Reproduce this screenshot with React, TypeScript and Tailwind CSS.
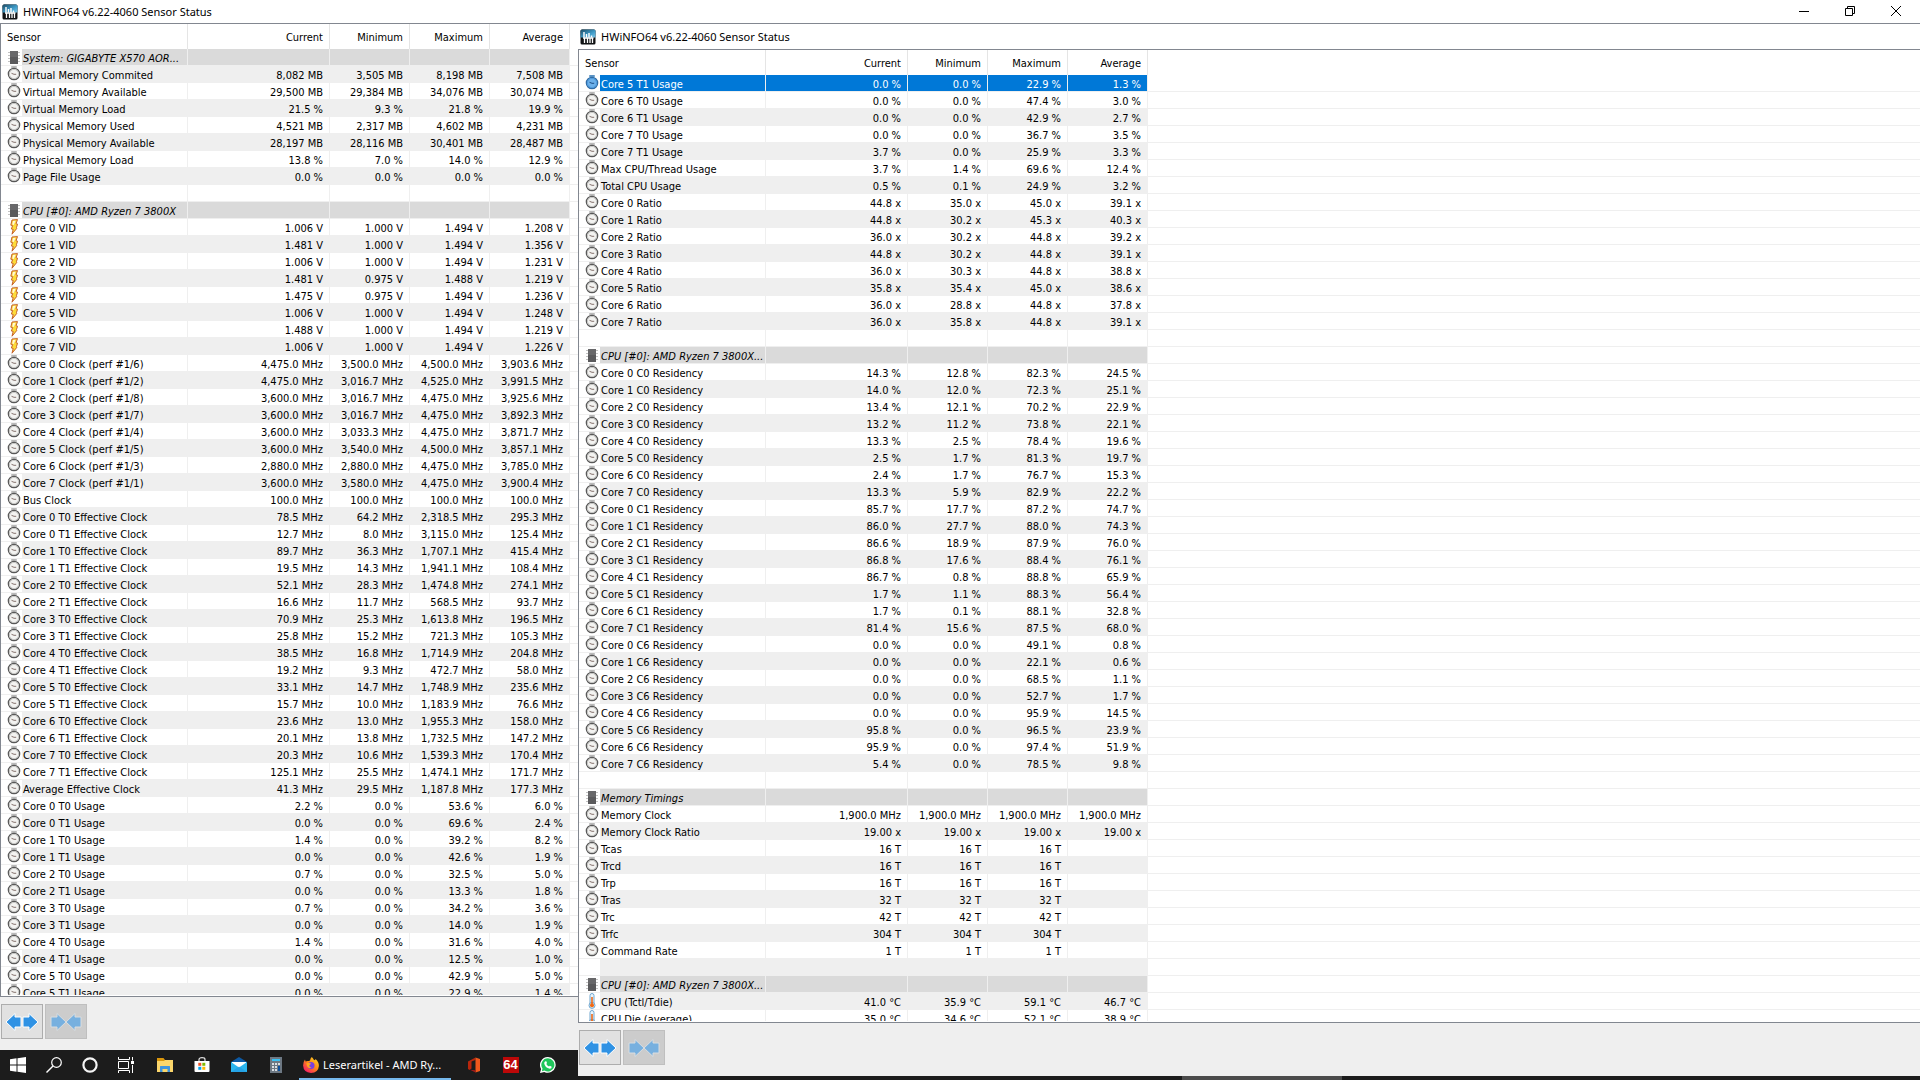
import React from "react";

type Kind = "clock" | "bolt" | "temp" | "chip" | "none";
type Row = { kind: Kind; label: string; values: string[] };

const parse = (source: string): Row[] =>
  source
    .trim()
    .split("\n")
    .map((line) => {
      const [code, label = "", data = "", unit = ""] = line.trim().split("|");
      const kinds: Record<string, Kind> = { c: "clock", v: "bolt", t: "temp", h: "chip", "-": "none" };
      const values = data ? data.split(" ").map((n) => `${n} ${unit}`) : [];
      return { kind: kinds[code], label, values };
    });

const leftRows = parse(`
h|System: GIGABYTE X570 AOR...
c|Virtual Memory Commited|8,082 3,505 8,198 7,508|MB
c|Virtual Memory Available|29,500 29,384 34,076 30,074|MB
c|Virtual Memory Load|21.5 9.3 21.8 19.9|%
c|Physical Memory Used|4,521 2,317 4,602 4,231|MB
c|Physical Memory Available|28,197 28,116 30,401 28,487|MB
c|Physical Memory Load|13.8 7.0 14.0 12.9|%
c|Page File Usage|0.0 0.0 0.0 0.0|%
-
h|CPU [#0]: AMD Ryzen 7 3800X
v|Core 0 VID|1.006 1.000 1.494 1.208|V
v|Core 1 VID|1.481 1.000 1.494 1.356|V
v|Core 2 VID|1.006 1.000 1.494 1.231|V
v|Core 3 VID|1.481 0.975 1.488 1.219|V
v|Core 4 VID|1.475 0.975 1.494 1.236|V
v|Core 5 VID|1.006 1.000 1.494 1.248|V
v|Core 6 VID|1.488 1.000 1.494 1.219|V
v|Core 7 VID|1.006 1.000 1.494 1.226|V
c|Core 0 Clock (perf #1/6)|4,475.0 3,500.0 4,500.0 3,903.6|MHz
c|Core 1 Clock (perf #1/2)|4,475.0 3,016.7 4,525.0 3,991.5|MHz
c|Core 2 Clock (perf #1/8)|3,600.0 3,016.7 4,475.0 3,925.6|MHz
c|Core 3 Clock (perf #1/7)|3,600.0 3,016.7 4,475.0 3,892.3|MHz
c|Core 4 Clock (perf #1/4)|3,600.0 3,033.3 4,475.0 3,871.7|MHz
c|Core 5 Clock (perf #1/5)|3,600.0 3,540.0 4,500.0 3,857.1|MHz
c|Core 6 Clock (perf #1/3)|2,880.0 2,880.0 4,475.0 3,785.0|MHz
c|Core 7 Clock (perf #1/1)|3,600.0 3,580.0 4,475.0 3,900.4|MHz
c|Bus Clock|100.0 100.0 100.0 100.0|MHz
c|Core 0 T0 Effective Clock|78.5 64.2 2,318.5 295.3|MHz
c|Core 0 T1 Effective Clock|12.7 8.0 3,115.0 125.4|MHz
c|Core 1 T0 Effective Clock|89.7 36.3 1,707.1 415.4|MHz
c|Core 1 T1 Effective Clock|19.5 14.3 1,941.1 108.4|MHz
c|Core 2 T0 Effective Clock|52.1 28.3 1,474.8 274.1|MHz
c|Core 2 T1 Effective Clock|16.6 11.7 568.5 93.7|MHz
c|Core 3 T0 Effective Clock|70.9 25.3 1,613.8 196.5|MHz
c|Core 3 T1 Effective Clock|25.8 15.2 721.3 105.3|MHz
c|Core 4 T0 Effective Clock|38.5 16.8 1,714.9 204.8|MHz
c|Core 4 T1 Effective Clock|19.2 9.3 472.7 58.0|MHz
c|Core 5 T0 Effective Clock|33.1 14.7 1,748.9 235.6|MHz
c|Core 5 T1 Effective Clock|15.7 10.0 1,183.9 76.6|MHz
c|Core 6 T0 Effective Clock|23.6 13.0 1,955.3 158.0|MHz
c|Core 6 T1 Effective Clock|20.1 13.8 1,732.5 147.2|MHz
c|Core 7 T0 Effective Clock|20.3 10.6 1,539.3 170.4|MHz
c|Core 7 T1 Effective Clock|125.1 25.5 1,474.1 171.7|MHz
c|Average Effective Clock|41.3 29.5 1,187.8 177.3|MHz
c|Core 0 T0 Usage|2.2 0.0 53.6 6.0|%
c|Core 0 T1 Usage|0.0 0.0 69.6 2.4|%
c|Core 1 T0 Usage|1.4 0.0 39.2 8.2|%
c|Core 1 T1 Usage|0.0 0.0 42.6 1.9|%
c|Core 2 T0 Usage|0.7 0.0 32.5 5.0|%
c|Core 2 T1 Usage|0.0 0.0 13.3 1.8|%
c|Core 3 T0 Usage|0.7 0.0 34.2 3.6|%
c|Core 3 T1 Usage|0.0 0.0 14.0 1.9|%
c|Core 4 T0 Usage|1.4 0.0 31.6 4.0|%
c|Core 4 T1 Usage|0.0 0.0 12.5 1.0|%
c|Core 5 T0 Usage|0.0 0.0 42.9 5.0|%
c|Core 5 T1 Usage|0.0 0.0 22.9 1.4|%
`);

const rightRows = parse(`
c|Core 5 T1 Usage|0.0 0.0 22.9 1.3|%
c|Core 6 T0 Usage|0.0 0.0 47.4 3.0|%
c|Core 6 T1 Usage|0.0 0.0 42.9 2.7|%
c|Core 7 T0 Usage|0.0 0.0 36.7 3.5|%
c|Core 7 T1 Usage|3.7 0.0 25.9 3.3|%
c|Max CPU/Thread Usage|3.7 1.4 69.6 12.4|%
c|Total CPU Usage|0.5 0.1 24.9 3.2|%
c|Core 0 Ratio|44.8 35.0 45.0 39.1|x
c|Core 1 Ratio|44.8 30.2 45.3 40.3|x
c|Core 2 Ratio|36.0 30.2 44.8 39.2|x
c|Core 3 Ratio|44.8 30.2 44.8 39.1|x
c|Core 4 Ratio|36.0 30.3 44.8 38.8|x
c|Core 5 Ratio|35.8 35.4 45.0 38.6|x
c|Core 6 Ratio|36.0 28.8 44.8 37.8|x
c|Core 7 Ratio|36.0 35.8 44.8 39.1|x
-
h|CPU [#0]: AMD Ryzen 7 3800X...
c|Core 0 C0 Residency|14.3 12.8 82.3 24.5|%
c|Core 1 C0 Residency|14.0 12.0 72.3 25.1|%
c|Core 2 C0 Residency|13.4 12.1 70.2 22.9|%
c|Core 3 C0 Residency|13.2 11.2 73.8 22.1|%
c|Core 4 C0 Residency|13.3 2.5 78.4 19.6|%
c|Core 5 C0 Residency|2.5 1.7 81.3 19.7|%
c|Core 6 C0 Residency|2.4 1.7 76.7 15.3|%
c|Core 7 C0 Residency|13.3 5.9 82.9 22.2|%
c|Core 0 C1 Residency|85.7 17.7 87.2 74.7|%
c|Core 1 C1 Residency|86.0 27.7 88.0 74.3|%
c|Core 2 C1 Residency|86.6 18.9 87.9 76.0|%
c|Core 3 C1 Residency|86.8 17.6 88.4 76.1|%
c|Core 4 C1 Residency|86.7 0.8 88.8 65.9|%
c|Core 5 C1 Residency|1.7 1.1 88.3 56.4|%
c|Core 6 C1 Residency|1.7 0.1 88.1 32.8|%
c|Core 7 C1 Residency|81.4 15.6 87.5 68.0|%
c|Core 0 C6 Residency|0.0 0.0 49.1 0.8|%
c|Core 1 C6 Residency|0.0 0.0 22.1 0.6|%
c|Core 2 C6 Residency|0.0 0.0 68.5 1.1|%
c|Core 3 C6 Residency|0.0 0.0 52.7 1.7|%
c|Core 4 C6 Residency|0.0 0.0 95.9 14.5|%
c|Core 5 C6 Residency|95.8 0.0 96.5 23.9|%
c|Core 6 C6 Residency|95.9 0.0 97.4 51.9|%
c|Core 7 C6 Residency|5.4 0.0 78.5 9.8|%
-
h|Memory Timings
c|Memory Clock|1,900.0 1,900.0 1,900.0 1,900.0|MHz
c|Memory Clock Ratio|19.00 19.00 19.00 19.00|x
c|Tcas|16 16 16|T
c|Trcd|16 16 16|T
c|Trp|16 16 16|T
c|Tras|32 32 32|T
c|Trc|42 42 42|T
c|Trfc|304 304 304|T
c|Command Rate|1 1 1|T
-
h|CPU [#0]: AMD Ryzen 7 3800X...
t|CPU (Tctl/Tdie)|41.0 35.9 59.1 46.7|°C
t|CPU Die (average)|35.0 34.6 52.1 38.9|°C
`);

function RowIcon({ kind, selected }: { kind: Kind; selected?: boolean }) {
  if (kind === "none") return null;
  return (
    <svg viewBox="0 0 16 16" className="ml-[5px] block size-4" aria-hidden="true">
      {kind === "clock" && (
        <>
          <rect x="5" y="0" width="6" height="2" rx="1" fill={selected ? "#5b93c4" : "#b9b9b9"} />
          <circle cx="8" cy="8" r="5.7" fill={selected ? "#6cb0ea" : "#f3f3f1"} stroke={selected ? "#2f6ba5" : "#575757"} strokeWidth="1.2" />
          <circle cx="8" cy="8" r="4.600" fill="none" stroke={selected ? "#4f9bdd" : "#c6c6c4"} strokeWidth="1" />
          <path d="M5.500 7.300 L8 8.300 H10.200" fill="none" stroke={selected ? "#1d4f86" : "#85726e"} strokeWidth="1" />
        </>
      )}
      {kind === "bolt" && (
        <>
          <path d="M6 1 L11.5 .6 L10 4.8 L11.6 5.2 L10.4 8.6 L11 9.2 L6 15.2 L7.2 10.4 L5.4 10 L6.6 6.6 L4.8 6.2 Z" fill="#fddc3a" stroke="#c4622d" strokeWidth="1" />
          <path d="M7 2 L9.6 1.8 L7.8 6 L6.3 5.4 Z" fill="#fff7d8" />
        </>
      )}
      {kind === "temp" && (
        <>
          <rect x="6" y=".5" width="4" height="12" rx="2" fill="#eaf5fd" stroke="#6fa6cf" strokeWidth="1" />
          <circle cx="8" cy="12.4" r="3" fill="#d9ecf9" stroke="#6fa6cf" strokeWidth="1" />
          <circle cx="8" cy="12.2" r="2" fill="#f26a14" />
          <rect x="7.2" y="4" width="1.6" height="8" fill="#ee6a1b" />
        </>
      )}
      {kind === "chip" && (
        <>
          <path d="M2 3.500h12M2 6.500h12M2 9.500h12M2 12.500h12" stroke="#c2c2c2" strokeWidth="1" />
          <rect x="4" y="2" width="8" height="13" fill="#5a5a5c" />
          <rect x="4" y="2" width="8" height="6" fill="#68686a" />
        </>
      )}
    </svg>
  );
}

function SensorTable({ rows, stripe, selected }: { rows: Row[]; stripe: number; selected?: number }) {
  return (
    <div className="min-h-0 flex-1 overflow-hidden border-b border-l border-[#828790] pb-px">
      <div className="h-full overflow-hidden">
        <table className="w-full table-fixed border-separate border-spacing-0 text-[11px] leading-[13px] whitespace-nowrap">
          <colgroup>
            <col className="w-[21px]" />
            <col className="w-[166px]" />
            <col className="w-[142px]" />
            <col className="w-20" />
            <col className="w-20" />
            <col className="w-20" />
            <col />
          </colgroup>
          <thead>
            <tr className="h-[25px]">
              <th colSpan={2} scope="col" className="border-r border-[#e5e5e5] p-0 pt-0.5 pl-1.5 text-left font-normal">
                Sensor
              </th>
              {["Current", "Minimum", "Maximum", "Average"].map((name) => (
                <th key={name} scope="col" className="border-r border-[#e5e5e5] p-0 pt-0.5 pr-1.5 text-right font-normal">
                  {name}
                </th>
              ))}
              <td className="p-0" />
            </tr>
          </thead>
          <tbody>
            {rows.map((row, i) => {
              const isSelected = i === selected;
              const striped = i % 2 === stripe;
              const tone = isSelected
                ? "bg-[#0078d7] text-white"
                : row.kind === "chip"
                  ? "bg-[#dadada]"
                  : striped
                    ? "bg-[#efefef]"
                    : "bg-white";
              return (
                <tr key={i} className="h-[17px]">
                  <td className="border-b border-[#efefef] p-0">
                    <RowIcon kind={row.kind} selected={isSelected} />
                  </td>
                  <td
                    className={`overflow-hidden border-r border-b border-[#efefef] p-0 pt-[3px] pl-px ${tone} ${row.kind === "chip" ? "italic" : ""}`}
                  >
                    {row.label}
                  </td>
                  {[0, 1, 2, 3].map((c) => (
                    <td key={c} className={`border-r border-b border-[#efefef] p-0 pt-[3px] pr-1.5 text-right ${tone}`}>
                      {row.values[c]}
                    </td>
                  ))}
                  <td className="border-b border-[#efefef] p-0" />
                </tr>
              );
            })}
          </tbody>
        </table>
      </div>
    </div>
  );
}

function AppLogo() {
  return (
    <svg viewBox="0 0 16 16" className="size-4 shrink-0" aria-hidden="true">
      <defs>
        <linearGradient id="logoTop" x1="0" y1="0" x2="1" y2="1">
          <stop offset="0" stopColor="#1b4a63" />
          <stop offset=".6" stopColor="#3f9cc9" />
          <stop offset="1" stopColor="#7cc5e6" />
        </linearGradient>
      </defs>
      <rect x=".5" y=".5" width="15" height="15" rx="1.5" fill="#101214" />
      <path d="M.5 2A1.5 1.5 0 0 1 2 .5h12A1.5 1.5 0 0 1 15.500 2v6.500H.5z" fill="url(#logoTop)" />
      <path d="M4 3v5.500M6.500 5v3.500M9 4v4.500M11.500 6.500v2" stroke="#fff" strokeWidth="1.4" />
      <path d="M3 9h10.500M4.500 9.500V14M7.500 9.500V14M10 9.500V14M12.500 9.500V14" stroke="#fff" strokeWidth="1.3" />
    </svg>
  );
}

function WindowTitle() {
  return (
    <div className="flex items-center gap-[5px] pl-0.5">
      <AppLogo />
      <span className="pt-0.5 font-['Noto_Sans','Open_Sans',sans-serif] text-[11px]">HWiNFO64 v6.22-4060 Sensor Status</span>
    </div>
  );
}

function ArrowButtons() {
  return (
    <div className="flex gap-0.5 pt-[7px] pl-px">
      <button aria-label="Expand columns" className="flex h-[35px] w-[42px] items-center justify-center border border-[#adadad] bg-[#e1e1e1]">
        <svg viewBox="0 0 34 20" className="h-5 w-[34px]" fill="#2f92e4" stroke="#fff" strokeWidth="1">
          <path d="M1 10 L10 1.500 V5 H16 V15 H10 V18.500 Z" />
          <path d="M33 10 L24 1.500 V5 H18 V15 H24 V18.500 Z" />
        </svg>
      </button>
      <button disabled aria-label="Shrink columns" className="flex h-[35px] w-[42px] items-center justify-center border border-[#bfbfbf] bg-[#cccccc]">
        <svg viewBox="0 0 34 20" className="h-5 w-[34px]" fill="#77b0df" stroke="#d9dde0" strokeWidth="1">
          <path d="M2 5 H8 V1.500 L17 10 L8 18.500 V15 H2 Z" />
          <path d="M32 5 H26 V1.500 L17 10 L26 18.500 V15 H32 Z" />
        </svg>
      </button>
    </div>
  );
}

function TaskButton({ name, className, children }: { name: string; className: string; children: React.ReactNode }) {
  return (
    <button aria-label={name} className={`flex h-full items-center justify-center ${className}`}>
      <svg viewBox="0 0 16 16" className="size-4" aria-hidden="true">
        {children}
      </svg>
    </button>
  );
}

function Taskbar() {
  return (
    <nav className="flex h-[30px] shrink-0 items-center bg-[#1c1c1c] text-white">
      <TaskButton name="Start" className="w-9">
        <path fill="#fff" d="M0 2.200 6.500 1.300V7.500H0zM7.500 1.200 16 0V7.500H7.500zM0 8.500H6.500V14.700L0 13.800zM7.500 8.500H16V16L7.500 14.800z" />
      </TaskButton>
      <TaskButton name="Search" className="w-9">
        <circle cx="10.500" cy="5.500" r="4.800" fill="none" stroke="#fff" strokeWidth="1.2" />
        <path d="M7 9 .5 15.500" stroke="#fff" strokeWidth="1.4" />
      </TaskButton>
      <TaskButton name="Cortana" className="w-9">
        <circle cx="8" cy="8" r="6.600" fill="none" stroke="#f4f4f4" strokeWidth="2.200" />
      </TaskButton>
      <TaskButton name="Task view" className="w-9">
        <path
          d="M.5 0V2.500H11.500V0M.5 16V13.500H11.500V16M.5 4.500H10.500V11.500H.5zM14.500 0V3.500M14.500 8V16"
          fill="none"
          stroke="#fff"
          strokeWidth="1"
        />
        <rect x="13" y="4" width="3" height="3" fill="#fff" />
      </TaskButton>
      <TaskButton name="File Explorer" className="ml-0.5 w-[37px]">
        <path fill="#d9960c" d="M0 1H6.500L8 3H16V8H0z" />
        <path fill="#fbd66b" d="M0 4H7L8 3H16V15H0z" />
        <path fill="#3f95dd" d="M3 15V9.500Q3 9 3.500 9H12.500Q13 9 13 9.500V15H10.500V12H5.500V15z" />
      </TaskButton>
      <TaskButton name="Microsoft Store" className="w-[37px]">
        <path d="M5 4V2.500Q5 .7 8 .7T11 2.500V4" fill="none" stroke="#ddd" strokeWidth="1.2" />
        <path fill="#fff" d="M.5 4H15.500V14Q15.500 15 14.500 15H1.500Q.5 15 .5 14z" />
        <path fill="#f25022" d="M4.300 5.800H7.300V8.800H4.300z" />
        <path fill="#7fba00" d="M8.300 5.800H11.300V8.800H8.300z" />
        <path fill="#00a4ef" d="M4.300 9.800H7.300V12.800H4.300z" />
        <path fill="#ffb900" d="M8.300 9.800H11.300V12.800H8.300z" />
      </TaskButton>
      <TaskButton name="Mail" className="w-[37px]">
        <path fill="#0c59a4" d="M0 5 8 0 16 5V9H0z" />
        <path fill="#fff" d="M1 5H15V9L8 11 1 9z" />
        <path fill="#2bb5ee" d="M0 5 8 10.500 16 5V15H0z" />
        <path fill="#1f8fdb" d="M0 15 8 9.500 16 15z" opacity=".5" />
      </TaskButton>
      <TaskButton name="Calculator" className="w-[37px]">
        <rect x="2" y="0" width="12" height="16" fill="#6d7883" />
        <rect x="4" y="2" width="8" height="2" fill="#38c1f4" />
        <path fill="#d8dde2" d="M4 6h2v2H4zM7 6h2v2H7zM10 6h2v2h-2zM4 9h2v2H4zM7 9h2v2H7zM4 12h2v2H4zM7 12h2v2H7z" />
        <rect x="10" y="9" width="2" height="5" fill="#0b4f9e" />
      </TaskButton>
      <button className="ml-[5px] flex h-full w-[152px] items-center gap-1 border-b-2 border-[#76b9ed] pt-0.5 pl-1">
        <svg viewBox="0 0 16 16" className="size-4 shrink-0" aria-hidden="true">
          <defs>
            <linearGradient id="foxFire" x1="1" y1="0" x2=".2" y2="1">
              <stop offset="0" stopColor="#ffe226" />
              <stop offset=".5" stopColor="#ff8a16" />
              <stop offset="1" stopColor="#f5156c" />
            </linearGradient>
          </defs>
          <path
            fill="url(#foxFire)"
            d="M8.800 0Q10 1 10.800 2.700L12 3.300 12.500 2Q16 5 15.900 9Q15.300 15.800 8 16Q.5 15.500 .1 8.500Q.1 5 2 2.500L2.500 4.500 4.500 4Q6 4 7 3.500Q7.300 1.200 8.800 0z"
          />
          <circle cx="8" cy="8.600" r="3.500" fill="#7a3fe0" />
          <path fill="#ffa51c" d="M3.500 6Q6 5 8.200 6.800L6.500 8Q6 10 8.500 10.500Q6 12 4.500 10Q3.200 8 3.500 6z" />
        </svg>
        <span className="font-['Noto_Sans','Open_Sans',sans-serif] text-[11px] whitespace-nowrap">Leserartikel - AMD Ry...</span>
      </button>
      <TaskButton name="Office" className="ml-1 w-[37px]">
        <path fill="#b8260c" d="M2 4.500 9.500 .5V3L5.500 4.500V11.500L3.500 13 2 12z" />
        <path fill="#f0581c" d="M9.500 .5 14 2V14L9.500 15.500z" />
        <path fill="#a31919" d="M4 12.800 9.500 13.300V15.500z" />
      </TaskButton>
      <button aria-label="HWiNFO64" className="flex h-full w-[37px] items-center justify-center">
        <span className="flex size-4 items-center justify-center bg-[#bd0808] font-['Liberation_Sans',sans-serif] text-[13px] leading-4 font-bold">
          64
        </span>
      </button>
      <TaskButton name="WhatsApp" className="w-[37px]">
        <path fill="#fff" d="M8 0A7.900 7.900 0 1 1 4.300 15L0 16 1.100 11.900A7.900 7.900 0 0 1 8 0z" />
        <path fill="#1fc65b" d="M8 1.300A6.600 6.600 0 1 1 4.500 13.600L1.900 14.200 2.500 11.600A6.600 6.600 0 0 1 8 1.300z" />
        <path fill="#fff" d="M5.500 4.200 6.300 4.300 7 6 6.300 7Q7.200 8.800 9 9.600L9.900 8.800 11.700 9.700Q11.800 11.500 9.800 11.700Q5 11 4.200 6.300Q4.300 4.700 5.500 4.200z" />
      </TaskButton>
    </nav>
  );
}

export default function App() {
  return (
    <div className="flex h-screen w-full flex-col overflow-hidden bg-white font-['DejaVu_Sans_Condensed','DejaVu_Sans',sans-serif] text-black">
      <header className="flex h-6 shrink-0 items-stretch justify-between border-b border-[#828790]">
        <WindowTitle />
        <div className="flex pr-px pb-0.5">
          <button aria-label="Minimize" className="flex w-[46px] items-center justify-center">
            <svg viewBox="0 0 10 10" className="size-2.5" stroke="#000">
              <path d="M0 5.500H10" />
            </svg>
          </button>
          <button aria-label="Restore" className="flex w-[46px] items-center justify-center">
            <svg viewBox="0 0 10 10" className="size-2.5" fill="none" stroke="#000">
              <path d="M.5 2.500H7.500V9.500H.5zM2.500 2.500V.5H9.500V7.500H7.500" />
            </svg>
          </button>
          <button aria-label="Close" className="flex w-[46px] items-center justify-center">
            <svg viewBox="0 0 10 10" className="size-2.5" stroke="#000">
              <path d="M0 0 10 10M10 0 0 10" />
            </svg>
          </button>
        </div>
      </header>
      <main className="flex min-h-0 flex-1">
        <section className="flex w-[578px] shrink-0 flex-col" aria-label="Sensor list">
          <SensorTable rows={leftRows} stripe={1} />
          <div className="h-[53px] shrink-0 bg-[#efefef]">
            <ArrowButtons />
          </div>
          <Taskbar />
        </section>
        <section className="flex min-w-0 flex-1 flex-col" aria-label="Sensor list, continued">
          <div className="flex h-[26px] shrink-0 border-b border-[#828790]">
            <WindowTitle />
          </div>
          <SensorTable rows={rightRows} stripe={0} selected={0} />
          <div className="h-[53px] shrink-0 bg-[#efefef]">
            <ArrowButtons />
          </div>
          <div className="flex h-1 shrink-0 bg-[#1c1c1c]">
            <div className="ml-[604px] w-40 bg-[#4b4b4b]" />
          </div>
        </section>
      </main>
    </div>
  );
}
